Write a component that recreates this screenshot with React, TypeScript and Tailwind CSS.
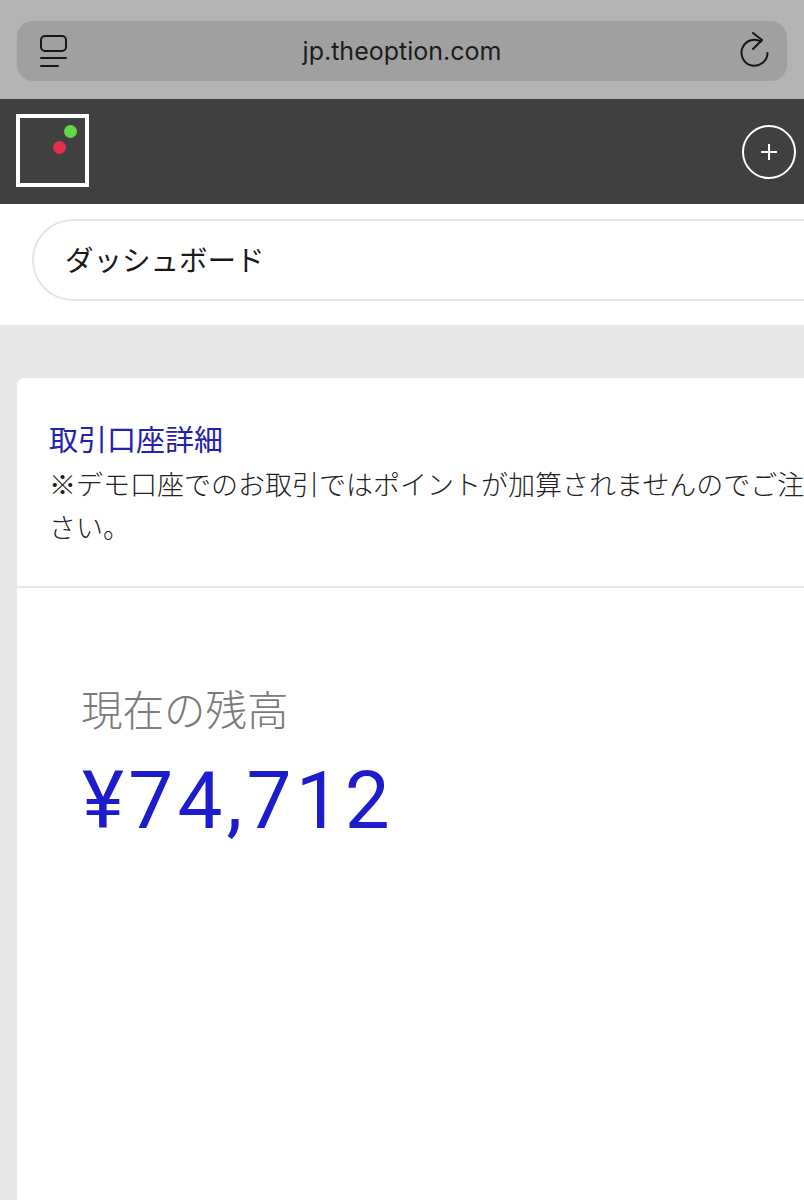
import React from 'react';

const cjk = "font-['Liberation_Sans','Noto_Sans_CJK_JP',sans-serif]";

const TabsIcon = () => (
  <svg width="30" height="34" viewBox="0 0 30 34" fill="none" stroke="#161616" strokeWidth="2" strokeLinecap="round">
    <rect x="2" y="2" width="25" height="15" rx="4" />
    <path d="M2 24h25" />
    <path d="M2 32h17" />
  </svg>
);

const ReloadIcon = () => (
  <svg width="32" height="38" viewBox="0 0 32 38" fill="none" stroke="#161616" strokeWidth="2" strokeLinecap="round" strokeLinejoin="round">
    <path d="M21 9.500A13 13 0 1 0 27.500 21" />
    <path d="M13 1l9 7-9 9" />
  </svg>
);

const App: React.FC = () => {
  return (
    <div className={`h-[1200px] w-[804px] overflow-hidden bg-white ${cjk}`}>
      {/* Browser bar */}
      <div className="h-[99px] bg-[#b3b3b3] px-[17px] pt-[21px]">
        <div className="flex h-[60px] w-[770px] items-center justify-between rounded-[16px] bg-[#a0a0a0] pl-[22px] pr-[15px]">
          <TabsIcon />
          <span className="mr-[5px] pt-[2px] font-['Inter',sans-serif] text-[25px] text-[#1c1c1c]">jp.theoption.com</span>
          <ReloadIcon />
        </div>
      </div>

      {/* Header */}
      <div className="flex h-[105px] items-center justify-between bg-[#404040] pl-4 pr-2">
        <div className="relative mb-[2px] h-[73px] w-[73px] border-[4px] border-white">
          <div className="absolute left-[44px] top-[7px] h-[13px] w-[13px] rounded-full bg-[#66d648] blur-[0.5px]" />
          <div className="absolute left-[33px] top-[23px] h-[13px] w-[13px] rounded-full bg-[#e52d4e] blur-[0.5px]" />
        </div>
        <div className="flex h-[54px] w-[54px] items-center justify-center rounded-full border-2 border-white">
          <svg width="18" height="18" viewBox="0 0 18 18" stroke="#fff" strokeWidth="2">
            <path d="M9 1v16M1 9h16" />
          </svg>
        </div>
      </div>

      {/* Breadcrumb */}
      <div className="w-[900px] px-[32px] pb-[24px] pt-[15px]">
        <div className="flex h-[82px] items-center rounded-l-[41px] border-2 border-[#e6e6e6] pl-[31px] pt-[3px] text-[28.500px] text-[#1a1a1a]">
          ダッシュボード
        </div>
      </div>

      {/* Page body */}
      <div className="h-[875px] w-[1000px] bg-[#e8e8e8] pl-[17px] pt-[53px]">
        <div className="h-full rounded-tl-[8px] bg-white">
          <div className="h-[210px] border-b-2 border-[#e6e6e6] px-[32px] pt-[44px]">
            <h2 className="text-[29px] leading-[38px] text-[#2222aa]">取引口座詳細</h2>
            <p className="mt-[5px] w-[850px] text-[27px] font-light leading-[43px] text-[#222222]">
              ※デモ口座でのお取引ではポイントが加算されませんのでご注意ください。
            </p>
          </div>
          <div className="pl-[64px] pt-[94px]">
            <p className="text-[41.500px] font-light leading-[60px] text-[#7a7a7a]">現在の残高</p>
            <p className="ml-[1px] mt-[11px] font-['Roboto',sans-serif] text-[80px] leading-[96px] tracking-[4.200px] text-[#1c1ccc]">¥74,712</p>
          </div>
        </div>
      </div>
    </div>
  );
};

export default App;
